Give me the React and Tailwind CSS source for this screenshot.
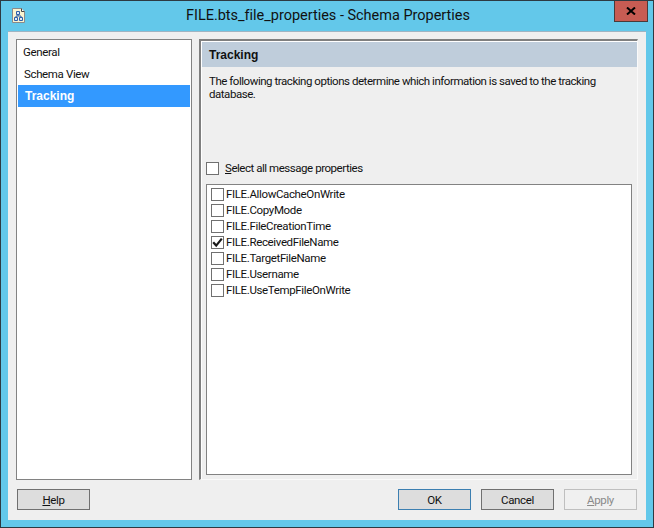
const ITEMS = [
  { label: "FILE.AllowCacheOnWrite" },
  { label: "FILE.CopyMode" },
  { label: "FILE.FileCreationTime" },
  { label: "FILE.ReceivedFileName", checked: true },
  { label: "FILE.TargetFileName" },
  { label: "FILE.Username" },
  { label: "FILE.UseTempFileOnWrite" },
];

const FONT = "font-['Roboto','Liberation_Sans',sans-serif]";
const BOLD = "font-['Liberation_Sans',Arial,sans-serif] font-bold text-[12px] tracking-normal";

function Box({ checked }) {
  return (
    <span className="relative block h-[13px] w-[13px] shrink-0 border border-[#707070] bg-white">
      {checked && (
        <svg viewBox="0 0 11 11" className="absolute left-0 top-0 h-[11px] w-[11px]">
          <path d="M1.2 5.2 L4.2 8.6 L9.8 1.6" fill="none" stroke="#1a1a1a" strokeWidth="2.2" />
        </svg>
      )}
    </span>
  );
}

function DocIcon() {
  return (
    <svg viewBox="0 0 13 15" className="h-[15px] w-[13px]">
      <path d="M.5.5h9l3 3v11H.5z" fill="#fbf3cf" stroke="#8a8a8a" />
      <path d="M9.5.5v3h3" fill="#fff" stroke="#444" />
      <path d="M4.5 3.5h3v3h-3zM2.5 9.5h3v3h-3zM7.5 9.5h3v3h-3z" fill="#dfeaf7" stroke="#2f5fa8" />
      <path d="M6 6.5v1.5M4 9.5V8h5v1.5" fill="none" stroke="#2f5fa8" />
    </svg>
  );
}

function Button({ children, className = "" }) {
  return (
    <button className={`flex h-[21px] w-[73px] items-center justify-center border text-[11.5px] ${className}`}>
      {children}
    </button>
  );
}

export default function App() {
  return (
    <div className={`flex h-[528px] w-[654px] flex-col border border-[#2d3a42] bg-[#63c8ea] text-[11.5px] leading-[16px] tracking-[-0.36px] text-[#111] ${FONT}`}>
      <div className="flex h-[30px] shrink-0">
        <div className="w-[24px] pl-[11px] pt-[7px]">
          <DocIcon />
        </div>
        <div className="flex-1 pl-[161px] pt-[5px] text-[14.5px] leading-[20px] tracking-[-0.02px] text-[#111]">
          FILE.bts_file_properties - Schema Properties
        </div>
        <div className="mr-[5px] flex h-[21px] w-[34px] items-center justify-center border border-t-0 border-[#4a3a3a] bg-[#c75c53]">
          <svg viewBox="0 0 10 8" className="h-[8px] w-[10px]">
            <path d="M1 0.5 L9 7.5 M9 0.5 L1 7.5" stroke="#000" strokeWidth="2" />
          </svg>
        </div>
      </div>

      <div className="mx-[7px] mb-[7px] flex flex-1 flex-col border-t border-[#9fb4c2] bg-[#efefef] px-[8px] pt-[7px]">
        <div className="flex h-[441px] gap-[7px]">
          <div className="w-[176px] shrink-0 border border-[#828282] bg-white p-[1px]">
            <div className="flex h-[22px] items-center pl-[5px]">General</div>
            <div className="flex h-[22px] items-center pl-[6px]">Schema View</div>
            <div className={`flex h-[22px] items-center bg-[#3399ff] pl-[7px] text-white ${BOLD}`}>Tracking</div>
          </div>

          <div className="flex flex-1 flex-col border-b border-l-2 border-r border-t-2 border-b-[#fafafa] border-l-[#7f7f7f] border-r-[#fafafa] border-t-[#7f7f7f]">
            <div className="flex flex-1 flex-col border-l border-t border-white">
              <div className={`flex h-[25px] shrink-0 items-center bg-[#bfcddb] pl-[7px] ${BOLD}`}>Tracking</div>
              <div className="pl-[7px] pr-[30px] pt-[8px] leading-[13px] tracking-[-0.46px]">
                The following tracking options determine which information is saved to the tracking database.
              </div>
              <label className="mt-[59px] flex items-center gap-[6px] pl-[4px]">
                <Box />
                <span className="tracking-[-0.46px]">
                  <span className="underline">S</span>elect all message properties
                </span>
              </label>
              <div className="mb-[4px] ml-[4px] mr-[5px] mt-[8px] flex-1 border border-[#828282] bg-white pl-[4px] pt-[1px]">
                {ITEMS.map((item) => (
                  <div key={item.label} className="flex h-[16px] items-center gap-[2px]">
                    <Box checked={item.checked} />
                    <span>{item.label}</span>
                  </div>
                ))}
              </div>
            </div>
          </div>
        </div>

        <div className="mt-[9px] flex pl-[1px]">
          <Button className="border-[#707070] bg-[#dddddd]">
            <span><span className="underline">H</span>elp</span>
          </Button>
          <div className="ml-auto flex gap-[10px] pr-[1px]">
            <Button className="border-[#3c7fb1] bg-[#dddddd]">OK</Button>
            <Button className="border-[#707070] bg-[#dddddd]">Cancel</Button>
            <Button className="border-[#bfbfbf] bg-[#f0f0f0] text-[#8a8a8a]">
              <span><span className="underline">A</span>pply</span>
            </Button>
          </div>
        </div>
      </div>
    </div>
  );
}
